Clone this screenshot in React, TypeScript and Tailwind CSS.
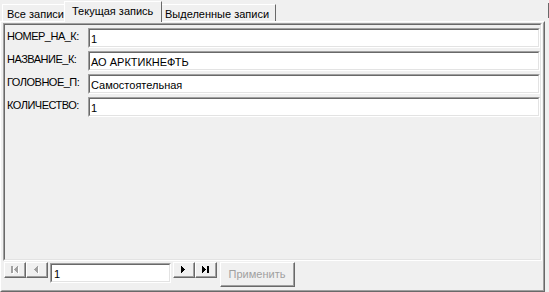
import React from "react";

const font = { fontFamily: '"Liberation Sans", Arial, sans-serif' };

function Tri({ dir, color }: { dir: "l" | "r"; color: string }) {
  const rects =
    dir === "r"
      ? [
          [0, 0, 7],
          [1, 1, 5],
          [2, 2, 3],
          [3, 3, 1],
        ]
      : [
          [3, 0, 7],
          [2, 1, 5],
          [1, 2, 3],
          [0, 3, 1],
        ];
  return (
    <>
      {rects.map(([x, y, h]) => (
        <rect key={x} x={x} y={y} width={1} height={h} fill={color} />
      ))}
    </>
  );
}

function NavIcon({ kind, disabled }: { kind: "first" | "prior" | "next" | "last"; disabled?: boolean }) {
  const c = disabled ? "#a0a0a0" : "#000000";
  const draw = (color: string, dx: number, dy: number) => (
    <g transform={`translate(${dx} ${dy})`}>
      {kind === "first" && (
        <>
          <rect x={0} y={0} width={2} height={7} fill={color} />
          <g transform="translate(3 0)">
            <Tri dir="l" color={color} />
          </g>
        </>
      )}
      {kind === "prior" && <Tri dir="l" color={color} />}
      {kind === "next" && <Tri dir="r" color={color} />}
      {kind === "last" && (
        <>
          <Tri dir="r" color={color} />
          <rect x={5} y={0} width={2} height={7} fill={color} />
        </>
      )}
    </g>
  );
  const w = kind === "first" || kind === "last" ? 8 : 5;
  return (
    <svg width={w} height={8} shapeRendering="crispEdges">
      {disabled && draw("#ffffff", 1, 1)}
      {draw(c, 0, 0)}
    </svg>
  );
}

function NavButton({ kind, disabled }: { kind: "first" | "prior" | "next" | "last"; disabled?: boolean }) {
  return (
    <div className="w-[22px] h-[16px] border border-t-white border-l-white border-b-[#696969] border-r-[#696969] bg-[#f0f0f0]">
      <div className="w-full h-full border-r border-b border-r-[#a0a0a0] border-b-[#a0a0a0] flex items-center justify-center">
        <NavIcon kind={kind} disabled={disabled} />
      </div>
    </div>
  );
}

function Field({ label, value }: { label: string; value: string }) {
  return (
    <div className="flex h-[20px]">
      <div className="w-[81px] shrink-0 pt-[2px] leading-[13px] tracking-[-0.5px] whitespace-nowrap">{label}</div>
      <div className="flex-1 h-[20px] border border-t-[#a0a0a0] border-l-[#a0a0a0] border-b-white border-r-white">
        <div className="w-full h-full bg-white border border-t-[#696969] border-l-[#696969] border-b-[#e3e3e3] border-r-[#e3e3e3] pl-[1px] pt-[2px] leading-[14px] whitespace-nowrap">
          {value}
        </div>
      </div>
    </div>
  );
}

export default function App() {
  return (
    <div className="w-[549px] h-[292px] bg-[#f0f0f0] overflow-hidden text-[11px] text-black" style={font}>
      <div className="flex items-end h-[21px] pl-[2px]">
        <div className="w-[62px] h-[17px] border-l border-t border-white pl-[4px] pt-[3px] leading-[13px] whitespace-nowrap rounded-tl-[1px]">
          Все записи
        </div>
        <div className="relative z-10 w-[98px] h-[21px] mb-[-1px] bg-[#f0f0f0] border-l border-t border-white border-r border-r-[#696969] pl-[7px] pt-[3px] leading-[13px] whitespace-nowrap">
          Текущая запись
        </div>
        <div className="w-[114px] h-[17px] border-t border-white border-r border-r-[#696969] pl-[3px] pt-[3px] leading-[13px] whitespace-nowrap">
          Выделенные записи
        </div>
        <div className="ml-auto w-[1px] h-[15px] mb-[3px] bg-[#696969]" />
      </div>

      <div className="w-[545px] h-[271px] border border-t-white border-l-white border-r-[#696969] border-b-[#696969]">
        <div className="w-full h-full border border-t-transparent border-l-transparent border-r-[#a0a0a0] border-b-[#a0a0a0] pl-[1px] pr-[1px] flex flex-col">
          <div className="h-[238px] border border-t-[#a0a0a0] border-l-[#a0a0a0] border-b-white border-r-white">
            <div className="w-full h-full border border-t-[#696969] border-l-[#696969] border-b-[#e3e3e3] border-r-[#e3e3e3] pl-[2px] pt-[3px] flex flex-col gap-[3px]">
              <Field label="НОМЕР_НА_К:" value="1" />
              <Field label="НАЗВАНИЕ_К:" value="АО АРКТИКНЕФТЬ" />
              <Field label="ГОЛОВНОЕ_П:" value="Самостоятельная" />
              <Field label="КОЛИЧЕСТВО:" value="1" />
            </div>
          </div>

          <div className="flex items-start pt-[1px] pl-[1px]">
            <NavButton kind="first" disabled />
            <NavButton kind="prior" disabled />
            <div className="ml-[2px] mt-[1px] w-[121px] h-[20px] border border-t-[#a0a0a0] border-l-[#a0a0a0] border-b-white border-r-white">
              <div className="w-full h-full bg-white border border-t-[#696969] border-l-[#696969] border-b-[#e3e3e3] border-r-[#e3e3e3] pl-[2px] pt-[2px] leading-[14px]">
                1
              </div>
            </div>
            <div className="ml-[2px] flex">
              <NavButton kind="next" />
              <NavButton kind="last" />
            </div>
            <div className="ml-[3px] w-[75px] h-[25px] border border-t-white border-l-white border-b-[#696969] border-r-[#696969]">
              <div className="w-full h-full border-r border-b border-r-[#a0a0a0] border-b-[#a0a0a0] flex items-center justify-center text-[#a0a0a0] leading-[13px]">
                Применить
              </div>
            </div>
          </div>
        </div>
      </div>
    </div>
  );
}
